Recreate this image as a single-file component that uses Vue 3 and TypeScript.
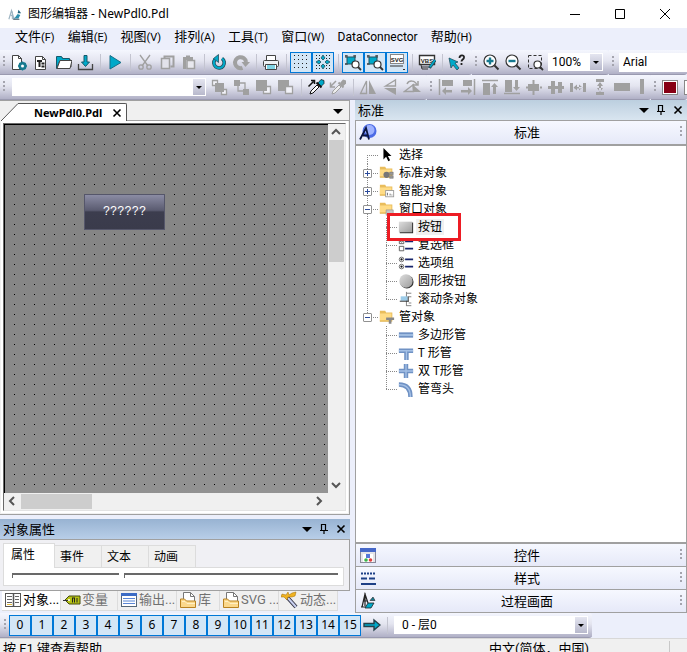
<script setup lang="ts">
import { ref } from 'vue'

interface Tool {
  icon?: string
  label?: string
  sep?: boolean
  on?: boolean
}
interface TreeNode {
  label: string
  icon: string
  depth: number
  toggle?: string
  last?: boolean
  selected?: boolean
}

const teal = '#00a9c9'
const dark = '#25404a'
const grey = '#a0a0a0'

const dots = (xs: number[], ys: number[]) =>
  ys.map((y) => xs.map((x) => `<rect x="${x}" y="${y}" width="1" height="1" fill="#222"/>`).join('')).join('')

const folder =
  '<path d="M1 2h6l1 2h7v10H1z" fill="#e9bd5c"/><path d="M1 5h13v8.500H1z" fill="#ffdc86"/><path d="M1 13.500h13" stroke="#d9a93f"/>'
const magnifier = (x: number, y: number, r: number) =>
  `<circle cx="${x}" cy="${y}" r="${r}" fill="#fff" stroke="#333" stroke-width="1.200"/><path d="M${x + r - 1} ${y + r - 1}l3 3" stroke="#333" stroke-width="1.800"/>`

const icons: Record<string, string> = {
  logo: '<path d="M1 14l3-10 3 10M3 9l4 3M5 5v9" fill="none" stroke="#9db4c2" stroke-width="1.300"/><path d="M8 12l3-4 3 1-2 4H6z" fill="#2b8fae"/><path d="M12 3l3 4h-4z" fill="#24647e"/><path d="M6 14h7" stroke="#20394a"/>',
  fresh: '<path d="M2.500 2.500h6l3 3v11h-9z" fill="#fff" stroke="#444"/><path d="M8.500 2.500v3h3" fill="none" stroke="#444"/><circle cx="12.500" cy="13" r="3" fill="#fff" stroke="#16798f" stroke-width="2.200"/><path d="M12.500 8.500v9M8 13h9M9.500 10l6 6M15.500 10l-6 6" stroke="#16798f" stroke-width="1.400"/><circle cx="12.500" cy="13" r="1.500" fill="#fff"/>',
  text: '<path d="M3.500 3.500h7l3 3v10h-10z" fill="#fff" stroke="#444"/><path d="M10.500 3.500v3h3" fill="none" stroke="#444"/><path d="M5 8h5M7.500 8v6M9.500 10.500h3M9.500 13.500h3" fill="none" stroke="#222" stroke-width="2"/>',
  open: `<path d="M3 13V5h6l2 2h6v7z" fill="#fff" stroke="#444"/><path d="M2.500 15.500V3.500h5l1 2h7v2h-9.500z" fill="${teal}" stroke="#16596b"/><path d="M6 7.500h12l-2 8H3z" fill="#fff" stroke="#444"/>`,
  save: `<path d="M2.500 11v5.500h14V11" fill="none" stroke="#444" stroke-width="1.300"/><path d="M8 2.500h3V9h2.500l-4 4.500L5.500 9H8z" fill="${teal}" stroke="#16596b"/>`,
  play: `<path d="M4 2.500l11 7L4 16z" fill="${teal}" stroke="#176f88"/>`,
  cut: `<g fill="none" stroke="${grey}" stroke-width="1.300"><path d="M4 2l8 11M14 2L6 13"/><circle cx="5" cy="14" r="2.200"/><circle cx="13" cy="14" r="2.200"/></g>`,
  copy: `<path d="M6.500 5V3.500h9v10h-3" fill="none" stroke="${grey}" stroke-width="2"/><path d="M3.500 5.500h8v10h-8z" fill="#e2e2ea" stroke="${grey}" stroke-width="1.500"/>`,
  paste: `<path d="M3 4h10v3H6v9H3z" fill="${grey}"/><path d="M6 2.500h4v2H6z" fill="${grey}"/><path d="M7 7.500h7.500v8H7z" fill="#e8e8ee" stroke="${grey}" stroke-width="1.500"/>`,
  undo: `<path d="M5 6.500A5.200 5.200 0 1 0 12 5.500" fill="none" stroke="#24515e" stroke-width="3.600"/><path d="M5 6.500A5.200 5.200 0 1 0 12 5.500" fill="none" stroke="${teal}" stroke-width="2"/><path d="M8.500 1.500v8l-5-4z" fill="${teal}" stroke="#24515e" stroke-width=".8"/>`,
  redo: `<path d="M10.500 14.800A5.500 5.500 0 1 1 14 9" fill="none" stroke="${grey}" stroke-width="4"/><path d="M9.500 9h8.500l-4.500 5z" fill="${grey}"/>`,
  print: `<path d="M4.500 7V2.500h9V7" fill="#fff" stroke="#444"/><rect x="1.500" y="7.500" width="15" height="6" rx="1" fill="#eef1f4" stroke="#444"/><path d="M3.500 11.500h11v5h-11z" fill="#fff" stroke="#444"/><path d="M5 13h8M5 15h8" stroke="${teal}"/>`,
  grid: dots([2, 6, 10, 14], [2, 6, 10, 14]),
  snap: `${dots([2, 5, 12, 15], [2, 5, 12, 15])}<path d="M9 2l2 3-2 2-2-2zM9 11l2 2-2 3-2-3zM2 9l3-2 2 2-2 2zM11 9l2-2 3 2-3 2z" fill="${teal}" stroke="#24515e" stroke-width=".8"/>`,
  zoomAll: `<path d="M1 3h3M9 3h3M2 2v3M11 2v3M2 10v2M1 11h3" stroke="#333"/><path d="M3 4h8v7H3z" fill="${teal}" stroke="#24515e"/>${magnifier(11.5, 11.5, 3.5)}`,
  svg: '<rect x="2.500" y="1.500" width="13" height="9" fill="#fff" stroke="#888"/><text x="9" y="8.500" text-anchor="middle" font-family="Liberation Sans" font-size="6" font-weight="bold" fill="#222">SVG</text><path d="M2 13h13M15 16.500h2" stroke="#333"/>',
  vbs: '<path d="M1.500 2.500h15v9h-15z" fill="#fff" stroke="#333" stroke-width="1.400"/><path d="M3 12l1 4h6M3 14h9" fill="none" stroke="#333"/><text x="9" y="9.500" text-anchor="middle" font-family="Liberation Sans" font-size="6" font-weight="bold" fill="#222">VBS</text><path d="M17 7l-5.500 8" stroke="#24515e" stroke-width="3"/><path d="M17 7l-5 7" stroke="#00a9c9" stroke-width="1.500"/>',
  help: `<path d="M1 5l9 4-3 1 4 5-2 2-4-5-2 3z" fill="${teal}" stroke="#24515e" stroke-width=".8"/><path d="M11.500 5c0-3.500 5-3.500 4.500-.5 0 2-2.500 2-2.500 4M13.500 10v2" fill="none" stroke="#222" stroke-width="1.800"/>`,
  zoomIn: '<circle cx="8" cy="8" r="6" fill="#fff" stroke="#333" stroke-width="1.200"/><path d="M12.500 12.500l4 4" stroke="#333" stroke-width="2"/><path d="M8 4.500v7M4.500 8h7" stroke="#16798f" stroke-width="2.400"/>',
  zoomOut: '<circle cx="8" cy="8" r="6" fill="#fff" stroke="#333" stroke-width="1.200"/><path d="M12.500 12.500l4 4" stroke="#333" stroke-width="2"/><path d="M4.500 8h7" stroke="#16798f" stroke-width="2.400"/>',
  zoomArea: `<path d="M2.500 2.500h13v13h-13z" fill="none" stroke="#333" stroke-dasharray="3 2"/>${magnifier(11.5, 11.5, 3.5)}`,
  front: `<path d="M1.500 2.500h5v5h-5zM10.500 11.500h5v5h-5z" fill="#f2f2f8" stroke="${grey}" stroke-width="1.300"/><path d="M4 5h9v9H4z" fill="${grey}"/>`,
  back: `<path d="M7 5h5v7M5 8v5h5" fill="none" stroke="${grey}" stroke-width="1.300"/><path d="M1 2h6v6H1zM10 11h6v6h-6z" fill="${grey}"/>`,
  forward: `<path d="M8.500 8.500h7v7h-7z" fill="#f2f2f8" stroke="${grey}" stroke-width="1.300"/><path d="M1 2h11v11H1z" fill="${grey}"/>`,
  backward: `<path d="M1 2h11v11H1z" fill="${grey}"/><path d="M8.500 8.500h7v7h-7z" fill="#f2f2f8" stroke="${grey}" stroke-width="1.300"/>`,
  pick: `<path d="M1.500 8.500l5-5M4 2.500h3.500V6" fill="none" stroke="#111" stroke-width="1.500"/><path d="M3 16l1-3 6-6 2 2-6 6z" fill="#fff" stroke="#111"/><path d="M11 5l3-3.500 3 1v3l-3 3z" fill="${teal}" stroke="#111" stroke-width=".7"/><path d="M9.500 4.500l5 5" stroke="#111" stroke-width="2"/>`,
  drop: `<path d="M7 3L2 8M1.500 4.500V9H6" fill="none" stroke="${grey}" stroke-width="1.500"/><path d="M3 16l1-3 6-6 2 2-6 6z" fill="#eee" stroke="${grey}"/><path d="M11 5l3-3.500 3 1v3l-3 3z" fill="${grey}"/><path d="M9.500 4.500l5 5" stroke="${grey}" stroke-width="2"/>`,
  flipH: `<path d="M7.500 3v12.500H1.500z" fill="none" stroke="${grey}" stroke-width="1.300"/><path d="M10 2v14h7z" fill="${grey}"/>`,
  flipV: `<path d="M14.500 2v6H4.500z" fill="none" stroke="${grey}" stroke-width="1.300"/><path d="M15 10v7L3 10z" fill="${grey}"/>`,
  rotate: `<path d="M1.500 13.500h9v-7z" fill="none" stroke="${grey}" stroke-width="1.300"/><path d="M10 14h8L9 6z" fill="${grey}"/><path d="M4 6c2-4 8-4 10 1M15 3v4h-4" fill="none" stroke="${grey}" stroke-width="1.500"/>`,
  alignL: `<path d="M2.500 1v16" stroke="${grey}" stroke-width="1.500"/><path d="M5 2h11v6H5zM5 13l4-4v3h6v2.500H9V17z" fill="${grey}"/>`,
  alignR: `<path d="M15.500 1v16" stroke="${grey}" stroke-width="1.500"/><path d="M4 2h9v6H4zM13 13L9 9v3H2v2.500h7V17z" fill="${grey}"/>`,
  alignT: `<path d="M1 2.500h16" stroke="${grey}" stroke-width="1.500"/><path d="M2 5h7v12H2zM12 16V9h-2l3.500-4L17 9h-2v7z" fill="${grey}"/>`,
  alignB: `<path d="M1 15.500h16" stroke="${grey}" stroke-width="1.500"/><path d="M2 2h7v12H2zM12 2v7h-2l3.500 4L17 9h-2V2z" fill="${grey}"/>`,
  centerH: `<path d="M3 6h11v7H3zM7.500 2h2v4h-2zM7.500 13h2v4h-2zM1 8.500h3v2H1zM15 8.500h2v2h-2z" fill="${grey}"/>`,
  centerV: `<path d="M4 3h4v13H4zM11 4h4v11h-4zM1 8h16v3H1z" fill="${grey}"/>`,
  spaceH: `<path d="M1 5h3v9H1zM14 5h3v9h-3zM5 9h8v1.500H5zM8 6.500v6L4.500 9.500zM10 6.500v6l3.500-3z" fill="${grey}"/>`,
  spaceV: `<path d="M5 1h8v3H5zM5 14h8v3H5zM8 5h2v8H8zM9 4l3 4H6zM9 14l3-4H6z" fill="${grey}"/>`,
  sameW: `<path d="M1 5h16v8H1z" fill="${grey}"/>`,
  sameH: `<path d="M7 1h4v15H7z" fill="${grey}"/>`,
  color: '<rect x="1.500" y="2.500" width="15" height="14" fill="#fff" stroke="#888"/><rect x="3" y="4" width="12" height="11" fill="#870014"/>',
  outline: '<rect x="1.500" y="2.500" width="15" height="14" fill="#fff" stroke="#888"/>',
  arrow: `<path d="M1 7.500h10V4l6 5-6 5v-3.500H1z" fill="${teal}" stroke="${dark}" stroke-width="1.400"/>`,
  caret: '<path d="M4 7h10l-5 5z" fill="#000"/>',
  pin: '<path d="M6.500 4.500h4v6h-4zM5 10.500h8M9 11v3M10.500 5v5" fill="none" stroke="#000" stroke-width="1.200"/>',
  close: '<path d="M5.500 5.500l7 7M12.500 5.500l-7 7" stroke="#000" stroke-width="1.600"/>',
  cursor: '<path d="M5 1v13l3-3 2.500 5 2-1-2.500-5h4z" fill="#000"/>',
  standard: `${folder}<circle cx="8.500" cy="11" r="3.500" fill="#777"/><path d="M12 8h4v3h-4zM12 12h4v3h-4z" fill="#999" stroke="#666" stroke-width=".5"/>`,
  smart: `${folder}<rect x="7.500" y="8.500" width="9" height="7" fill="#fff" stroke="#999"/><path d="M9.500 14v-3M12.500 14v-2M14.500 14v-1" stroke="#666"/>`,
  windowObj: `${folder}<path d="M8 10h8v6H8z" fill="#c6c6c6" stroke="#888" stroke-width=".6"/>`,
  pipeObj: `${folder}<path d="M8 9.500h9v3h-3v4h-3v-4H8z" fill="#888"/>`,
  button: '<rect x="2" y="4" width="15" height="12" fill="#222"/><rect x="1" y="3" width="15" height="12" fill="url(#btnShade)"/>',
  check: '<path d="M1.500 2.500h5v5h-5zM1.500 10.500h5v5h-5z" fill="#fff" stroke="#555"/><path d="M2 4l2 2 3-4" fill="none" stroke="#333"/><path d="M8 5h9M8 13h9" stroke="#17246b" stroke-width="2"/>',
  radio: '<circle cx="4" cy="5" r="2.600" fill="#fff" stroke="#666"/><circle cx="4" cy="13" r="2.600" fill="#fff" stroke="#666"/><circle cx="4" cy="5" r="1.300" fill="#111"/><circle cx="4" cy="13" r="1.300" fill="#111"/><path d="M8 5h9M8 13h9" stroke="#17246b" stroke-width="2"/>',
  round: '<circle cx="10" cy="10" r="7.500" fill="#333"/><circle cx="9" cy="9" r="7.500" fill="url(#btnShade)"/>',
  slider: '<path d="M9.500 1v16M10 2.500h5M10 16.500h5M12 6.500h3M12 13.500h3" stroke="#777"/><path d="M3 6h8v5H3z" fill="#9ccbe8"/><path d="M2 11.500h10M11.500 6v6" stroke="#222"/>',
  pipe: '<path d="M1 6h16v6H1z" fill="#7092c4"/><path d="M1 9h16" stroke="#a5c1e6" stroke-width="2"/>',
  tee: '<path d="M1 4h16v5h-5v8H7V9H1z" fill="#7092c4"/><path d="M1 6.500h16M9.500 7v10" stroke="#a5c1e6" stroke-width="1.500"/>',
  cross: '<path d="M6.500 1h5v5.500H17v5h-5.500V17h-5v-5.500H1v-5h5.500z" fill="#7092c4"/><path d="M1 9h16M9 1v16" stroke="#a5c1e6" stroke-width="1.500"/>',
  bend: '<path d="M1 4c9 0 13 5 13 14" fill="none" stroke="#7092c4" stroke-width="5"/><path d="M1 4c9 0 13 5 13 14" fill="none" stroke="#a5c1e6" stroke-width="1.500"/>',
  palette: '<circle cx="10.500" cy="8" r="7" fill="#4c6be6"/><circle cx="10.500" cy="7" r="5" fill="#9fb3ff"/><path d="M1 16.500L7 5l3 11.500M4 12.500h5" fill="none" stroke="#0b1540" stroke-width="1.800"/>',
  controls: '<rect x="1.500" y="2.500" width="15" height="14" fill="#e4e4e8" stroke="#889"/><path d="M1 2h16v4H1z" fill="#4668c8"/><path d="M4 8h10v8H4z" fill="#fff"/><path d="M7 8h4v4H7z" fill="#5577d8"/><circle cx="7" cy="14" r="1.800" fill="#3ab54a"/><circle cx="11.500" cy="14" r="1.800" fill="#e04040"/>',
  styles: '<path d="M2 4.500h15" stroke="#1d3f86" stroke-width="2" stroke-dasharray="2 1"/><path d="M2 9.500h15" stroke="#1d3f86" stroke-width="2" stroke-dasharray="6 2"/><path d="M2 15h15" stroke="#1d3f86" stroke-width="2"/>',
  process: `<path d="M3 15L6 2l3 9M4 9h4M6 1v13M2 15h5" fill="none" stroke="#222" stroke-width="1.200"/><path d="M6 16l3-5h6l-3 5z" fill="${teal}" stroke="#222" stroke-width=".8"/><path d="M11 8.500l3-3.500 2 3.500z" fill="#16798f" stroke="#222" stroke-width=".6"/>`,
  props: '<rect x="1.500" y="2.500" width="15" height="13" fill="#fff" stroke="#555"/><path d="M9.500 2v14" stroke="#555" stroke-width="1.500"/><path d="M3 5.500h5M3 8.500h5M3 11.500h5M11 5.500h4M11 8.500h4M11 11.500h4" stroke="#666"/><path d="M3 13.500h5" stroke="#e0b83e"/>',
  tag: '<path d="M2 9l4-4h11v8H6z" fill="#b5c215" stroke="#454a0c"/><circle cx="6" cy="9" r="1" fill="#fff"/><path d="M9.500 7v4.500M11.500 7v4.500M14 7v4.500M9 7h3" fill="none" stroke="#222"/><path d="M0 9.500h5" stroke="#333"/>',
  output: '<rect x="1.500" y="2.500" width="15" height="13" fill="#fff" stroke="#567"/><path d="M1 2h16v3H1z" fill="#3c6cc5"/><path d="M3 7.500h12M3 10h12M3 12.500h12" stroke="#5b87d6" stroke-width="1.200"/>',
  library: '<path d="M4.500 1.500h7l4 4v9h-11z" fill="#fff" stroke="#777"/><path d="M11.500 1.500v4h4" fill="none" stroke="#777"/><path d="M1.500 8h4l2 2h9v6.500h-15z" fill="#fbd88b" stroke="#b98220"/><path d="M3 10.500h3l2 2h8" fill="none" stroke="#fff0c4"/>',
  wand: '<path d="M6 6l9 10" stroke="#334" stroke-width="4"/><path d="M7 7l8 9" stroke="#c8d0f0" stroke-width="2"/><path d="M1 3l4 1 2-3 1 3 3-2 4-1-1 4-3 1-4 0-1 3-3-3-3 0z" fill="#f0b323" stroke="#a06c00" stroke-width=".5"/>',
}

const menus: [string, string][] = [
  ['文件', '(F)'], ['编辑', '(E)'], ['视图', '(V)'], ['排列', '(A)'],
  ['工具', '(T)'], ['窗口', '(W)'], ['DataConnector', ''], ['帮助', '(H)'],
]
const t = (icon: string, label: string, extra: Partial<Tool> = {}): Tool => ({ icon, label, ...extra })
const sep: Tool = { sep: true }

const fileTools: Tool[] = [
  t('fresh', '新建'), t('text', '新建文本'), t('open', '打开'), t('save', '保存'), sep,
  t('play', '运行'), sep,
  t('cut', '剪切'), t('copy', '复制'), t('paste', '粘贴'), sep,
  t('undo', '撤消'), t('redo', '重做'), sep,
  t('print', '打印'), sep,
  t('grid', '网格', { on: true }), t('snap', '捕捉', { on: true }), sep,
  t('zoomAll', '缩放 1', { on: true }), t('zoomAll', '缩放 2', { on: true }), t('svg', 'SVG', { on: true }), sep,
  t('vbs', 'VBS'), sep, t('help', '帮助'),
]
const zoomTools = [t('zoomIn', '放大'), t('zoomOut', '缩小'), t('zoomArea', '区域缩放')]
const orderTools: Tool[] = [
  t('front', '置前'), t('back', '置后'), t('forward', '前移'), t('backward', '后移'), sep,
  t('pick', '拾取属性'), t('drop', '应用属性'), sep,
  t('flipH', '水平翻转'), t('flipV', '垂直翻转'), t('rotate', '旋转'),
]
const alignTools = [
  t('alignL', '左对齐'), t('alignR', '右对齐'), t('alignT', '顶对齐'), t('alignB', '底对齐'), t('centerH', '水平居中'),
  t('centerV', '垂直居中'), t('spaceH', '水平间距'), t('spaceV', '垂直间距'), t('sameW', '同宽'), t('sameH', '同高'),
]
const colorTools = [t('color', '颜色'), t('outline', '边框颜色')]

const tree: TreeNode[] = [
  { label: '选择', icon: 'cursor', depth: 0 },
  { label: '标准对象', icon: 'standard', depth: 0, toggle: '+' },
  { label: '智能对象', icon: 'smart', depth: 0, toggle: '+' },
  { label: '窗口对象', icon: 'windowObj', depth: 0, toggle: '-' },
  { label: '按钮', icon: 'button', depth: 1, selected: true },
  { label: '复选框', icon: 'check', depth: 1 },
  { label: '选项组', icon: 'radio', depth: 1 },
  { label: '圆形按钮', icon: 'round', depth: 1 },
  { label: '滚动条对象', icon: 'slider', depth: 1, last: true },
  { label: '管对象', icon: 'pipeObj', depth: 0, toggle: '-', last: true },
  { label: '多边形管', icon: 'pipe', depth: 1 },
  { label: 'T 形管', icon: 'tee', depth: 1 },
  { label: '双 T形管', icon: 'cross', depth: 1 },
  { label: '管弯头', icon: 'bend', depth: 1, last: true },
]
const lastRoot = tree.findIndex((n) => n.depth === 0 && n.last)

const sections = [
  { label: '控件', icon: 'controls' },
  { label: '样式', icon: 'styles' },
  { label: '过程画面', icon: 'process' },
]
const propTabs = ['属性', '事件', '文本', '动画']
const dockTabs = [
  { label: '对象...', icon: 'props' },
  { label: '变量', icon: 'tag' },
  { label: '输出...', icon: 'output' },
  { label: '库', icon: 'library' },
  { label: 'SVG ...', icon: 'library' },
  { label: '动态...', icon: 'wand' },
]
const propTab = ref(0)
const dockTab = ref(0)
</script>

<template>
  <div class="app">
    <svg class="defs" width="0" height="0" aria-hidden="true">
      <linearGradient id="btnShade" x1="0" y1="0" x2="1" y2="1">
        <stop offset="0" stop-color="#dedede" />
        <stop offset="1" stop-color="#9c9c9c" />
      </linearGradient>
    </svg>

    <header class="titlebar">
      <svg class="icon logo" viewBox="0 0 16 16" v-html="icons.logo" />
      <span class="caption">图形编辑器 - NewPdl0.Pdl</span>
      <div class="winbtns">
        <button aria-label="最小化"><svg viewBox="0 0 12 12"><path d="M1 6.500h10" /></svg></button>
        <button aria-label="最大化"><svg viewBox="0 0 12 12"><path d="M1.500 1.500h9v9h-9z" /></svg></button>
        <button aria-label="关闭"><svg viewBox="0 0 12 12"><path d="M1 1l10 10M11 1L1 11" /></svg></button>
      </div>
    </header>

    <nav class="menubar">
      <a v-for="m in menus" :key="m[0]" href="#" :class="{ plain: !m[1] }">{{ m[0] }}<small v-if="m[1]">{{ m[1] }}</small></a>
    </nav>

    <div class="toolrow">
      <div class="band">
        <i class="grip" />
        <template v-for="(b, i) in fileTools" :key="i">
          <i v-if="b.sep" class="sep" />
          <button v-else class="tool" :class="{ on: b.on }" :aria-label="b.label">
            <svg class="icon" viewBox="0 0 18 18" v-html="icons[b.icon!]" />
          </button>
        </template>
      </div>
      <div class="band zooming">
        <i class="grip" />
        <button v-for="b in zoomTools" :key="b.label" class="tool" :aria-label="b.label">
          <svg class="icon" viewBox="0 0 18 18" v-html="icons[b.icon!]" />
        </button>
        <label class="combo zoom"><select aria-label="缩放比例"><option>100%</option></select><i class="drop" /></label>
      </div>
      <div class="band fill">
        <i class="grip" />
        <label class="combo font"><select aria-label="字体"><option>Arial</option></select></label>
      </div>
    </div>

    <div class="toolrow">
      <div class="band">
        <i class="grip" />
        <label class="combo object"><select aria-label="对象"><option></option></select><i class="drop" /></label>
        <template v-for="(b, i) in orderTools" :key="i">
          <i v-if="b.sep" class="sep" />
          <button v-else class="tool" :aria-label="b.label">
            <svg class="icon" viewBox="0 0 18 18" v-html="icons[b.icon!]" />
          </button>
        </template>
      </div>
      <div class="band align">
        <i class="grip" />
        <button v-for="b in alignTools" :key="b.label" class="tool" :aria-label="b.label">
          <svg class="icon" viewBox="0 0 18 18" v-html="icons[b.icon!]" />
        </button>
      </div>
      <div class="band fill">
        <i class="grip" />
        <button v-for="b in colorTools" :key="b.label" class="tool" :aria-label="b.label">
          <svg class="icon" viewBox="0 0 18 18" v-html="icons[b.icon!]" />
        </button>
      </div>
    </div>

    <main class="workspace">
      <div class="left">
        <section class="document">
          <div class="doctabs">
            <svg class="slant" viewBox="0 0 20 20" preserveAspectRatio="none">
              <path d="M0 20L18 2h2v18z" fill="#fff" /><path d="M1 20L18 2.500h2" fill="none" stroke="#555" />
            </svg>
            <div class="doctab">
              <span>NewPdl0.Pdl</span>
              <button aria-label="关闭"><svg class="icon" viewBox="0 0 18 18" v-html="icons.close" /></button>
            </div>
            <div class="tabrest">
              <button aria-label="文档列表"><svg class="icon" viewBox="0 0 18 18" v-html="icons.caret" /></button>
            </div>
          </div>
          <div class="view">
            <div class="canvas">
              <svg class="dots" aria-hidden="true">
                <pattern id="dotGrid" width="10" height="10" patternUnits="userSpaceOnUse">
                  <rect x="9" y="9" width="1" height="1" />
                </pattern>
                <rect width="100%" height="100%" fill="url(#dotGrid)" />
              </svg>
              <button class="canvas-button">??????</button>
            </div>
            <div class="vscroll">
              <svg viewBox="0 0 16 16"><path d="M4 10l4-4 4 4" /></svg>
              <i class="thumb" />
              <svg viewBox="0 0 16 16"><path d="M4 6l4 4 4-4" /></svg>
            </div>
            <div class="hscroll">
              <svg viewBox="0 0 16 16"><path d="M10 4L6 8l4 4" /></svg>
              <i class="thumb" />
              <svg viewBox="0 0 16 16"><path d="M6 4l4 4-4 4" /></svg>
            </div>
          </div>
        </section>

        <section class="props">
          <div class="panel-title active">
            <span>对象属性</span>
            <button v-for="k in ['caret', 'pin', 'close']" :key="k" :aria-label="k">
              <svg class="icon" viewBox="0 0 18 18" v-html="icons[k]" />
            </button>
          </div>
          <div class="props-body">
            <div class="proptabs">
              <button v-for="(p, i) in propTabs" :key="p" :class="{ current: propTab === i }" @click="propTab = i">{{ p }}</button>
            </div>
            <div class="wells"><i class="well tree-well" /><i class="well" /></div>
          </div>
        </section>

        <div class="docktabs">
          <button v-for="(d, i) in dockTabs" :key="d.label" :class="{ current: dockTab === i }" @click="dockTab = i">
            <svg class="icon" viewBox="0 0 18 18" v-html="icons[d.icon]" />{{ d.label }}
          </button>
        </div>
      </div>

      <aside class="right">
        <div class="panel-title">
          <span>标准</span>
          <button v-for="k in ['caret', 'pin', 'close']" :key="k" :aria-label="k">
            <svg class="icon" viewBox="0 0 18 18" v-html="icons[k]" />
          </button>
        </div>
        <div class="stack">
          <button class="section head">
            <svg class="icon" viewBox="0 0 18 18" v-html="icons.palette" /><span>标准</span><i class="grip" />
          </button>
          <ul class="tree">
            <li v-for="(n, i) in tree" :key="n.label" :class="{ selected: n.selected }">
              <i class="rail" :class="{ first: i === 0, half: i === lastRoot, none: i > lastRoot, branch: n.depth === 0 }">
                <b v-if="n.toggle" :class="{ plus: n.toggle === '+' }" />
              </i>
              <i v-if="n.depth" class="rail branch child" :class="{ half: n.last }" />
              <svg class="icon" viewBox="0 0 18 18" v-html="icons[n.icon]" />
              <span>{{ n.label }}</span>
              <i v-if="n.selected" class="marker" />
            </li>
          </ul>
          <button v-for="s in sections" :key="s.label" class="section">
            <svg class="icon" viewBox="0 0 18 18" v-html="icons[s.icon]" /><span>{{ s.label }}</span><i class="grip" />
          </button>
        </div>
      </aside>
    </main>

    <div class="toolrow layers">
      <div class="band">
        <i class="grip" />
        <button v-for="n in 16" :key="n" class="tool on">{{ n - 1 }}</button>
        <button class="tool" aria-label="转到层"><svg class="icon" viewBox="0 0 18 18" v-html="icons.arrow" /></button>
        <i class="sep" />
        <label class="combo layer"><select aria-label="层"><option>0 - 层0</option></select><i class="drop" /></label>
      </div>
    </div>

    <footer class="status">
      <span class="hint">按 F1 键查看帮助</span>
      <span class="lang">中文(简体，中国)</span>
    </footer>
  </div>
</template>

<style>
body {
  margin: 0;
  overflow: hidden;
}
</style>

<style scoped>
.app {
  display: flex;
  flex-direction: column;
  height: 100vh;
  overflow: hidden;
  background: #eceffb;
  color: #000;
  font: 12px/16px "Noto Sans", "Noto Sans CJK SC", sans-serif;
  white-space: nowrap;
}
.app * {
  box-sizing: border-box;
}
.defs {
  position: absolute;
}
button {
  display: flex;
  align-items: center;
  justify-content: center;
  flex: none;
  margin: 0;
  padding: 0;
  border: 0;
  background: none;
  color: inherit;
  font: inherit;
}
.icon {
  display: block;
  flex: none;
  width: 18px;
  height: 18px;
}

/* title and menu */
.titlebar {
  display: flex;
  align-items: center;
  flex: none;
  height: 28px;
  padding-left: 8px;
  background: #fff;
}
.logo {
  width: 14px;
  height: 16px;
}
.caption {
  flex: 1;
  padding-left: 6px;
}
.winbtns {
  display: flex;
}
.winbtns button {
  width: 45px;
  height: 26px;
}
.winbtns svg {
  width: 12px;
  height: 12px;
  fill: none;
  stroke: #000;
}
.menubar {
  display: flex;
  align-items: center;
  flex: none;
  gap: 13px;
  height: 22px;
  padding: 0 0 4px 15px;
}
.menubar a {
  color: #000;
  font-size: 13px;
  text-decoration: none;
}
.menubar a.plain {
  font-family: Roboto, sans-serif;
  font-size: 12px;
}
.menubar small {
  font-family: Roboto, sans-serif;
  font-size: 11px;
}

/* tool bars */
.toolrow {
  display: flex;
  flex: none;
  height: 25px;
  overflow: hidden;
}
.band {
  display: flex;
  align-items: center;
  flex: none;
  height: 25px;
  padding-right: 4px;
  border-bottom: 1px solid #9a9ab0;
  border-radius: 0 3px 3px 0;
  background: linear-gradient(#f4f6fe, #e4e5f0 45%, #b0b0c6);
}
.band.zooming {
  padding-right: 6px;
}
.band.fill {
  flex: 1;
  min-width: 0;
  padding-right: 0;
  overflow: hidden;
}
.grip {
  flex: none;
  width: 8px;
  height: 14px;
  background: repeating-linear-gradient(#a4a4ae 0 2px, transparent 2px 4px) 3px 1px / 2px 12px no-repeat;
}
.sep {
  flex: none;
  width: 8px;
  height: 17px;
  background: linear-gradient(#c3c4d0, #c3c4d0) 4px 0 / 1px 100% no-repeat;
}
.tool {
  width: 22px;
  height: 21px;
}
.tool.on {
  border: 1px solid #0078d7;
  background: #d3e6f6;
}
.align {
  padding: 0;
}
.align .tool:last-child {
  width: 18px;
}
.combo {
  display: flex;
  position: relative;
  flex: none;
  height: 18px;
  background: #fff;
  font-family: Roboto, "Noto Sans CJK SC", sans-serif;
}
.combo select {
  flex: 1;
  min-width: 0;
  padding: 0 4px;
  border: 0;
  background: transparent;
  color: #000;
  font: inherit;
  appearance: none;
}
.drop {
  width: 12px;
  margin: 1px;
  background: linear-gradient(#e4e5f0, #b8b9cc);
  pointer-events: none;
}
.drop::after {
  content: "";
  display: block;
  margin: 7px 3px 0;
  border: 3px solid transparent;
  border-top-color: #000;
  border-bottom: 0;
}
.zoom {
  width: 55px;
  margin-left: 2px;
}
.font {
  flex: 1;
  height: 19px;
  margin-left: 2px;
}
.object {
  width: 194px;
  margin: 0 3px 0 4px;
}
.layer {
  width: 194px;
  margin-left: 3px;
}
.layer select {
  padding-left: 8px;
}

/* work area */
.workspace {
  display: flex;
  flex: 1;
  gap: 5px;
  min-height: 0;
}
.left {
  display: flex;
  flex-direction: column;
  flex: 350 1 0;
  min-width: 0;
}
.document {
  display: flex;
  flex-direction: column;
  flex: 1;
  min-height: 0;
  border: solid #a0a0a0;
  border-width: 1px 1px 1px 0;
  background: #f0f0f0;
}
.doctabs {
  display: flex;
  flex: none;
  height: 20px;
}
.slant {
  flex: none;
  width: 20px;
  height: 20px;
}
.doctab {
  display: flex;
  align-items: center;
  justify-content: space-between;
  width: 107px;
  height: 18px;
  margin-top: 2px;
  padding-left: 14px;
  border: solid #555;
  border-width: 1px 1px 0 0;
  border-radius: 0 2px 0 0;
  background: #fff;
  font-size: 11px;
  font-weight: bold;
}
.tabrest {
  display: flex;
  align-items: center;
  justify-content: flex-end;
  flex: 1;
  padding-right: 2px;
  border-bottom: 1px solid #a0a0a0;
}
.view {
  display: grid;
  grid-template: minmax(0, 1fr) 17px / minmax(0, 1fr) 17px;
  flex: 1;
  min-height: 0;
  margin: 2px 3px 3px 3px;
  border: 1px solid #696969;
  border-right-color: #e3e3e3;
  border-bottom-color: #e3e3e3;
  outline: 2px solid #fff;
}
.canvas {
  position: relative;
  overflow: hidden;
  border: solid #000;
  border-width: 1px 0 0 1px;
  background: linear-gradient(160deg, #7f7f7f, #949494);
}
.dots {
  display: block;
  width: 100%;
  height: 100%;
}
.canvas-button {
  position: absolute;
  top: 69px;
  left: 79px;
  width: 81px;
  height: 36px;
  border: 1px solid #55566a;
  background: linear-gradient(#8b8ca4, #5a5b70 45%, #3c3d4e 50%, #3a3b4b);
  color: #fff;
  font-family: "Liberation Mono", monospace;
}
.vscroll,
.hscroll {
  display: flex;
}
.vscroll {
  flex-direction: column;
  justify-content: space-between;
}
.vscroll svg,
.hscroll svg {
  flex: none;
  width: 16px;
  height: 16px;
  fill: none;
  stroke: #555;
  stroke-width: 2px;
}
.thumb {
  background: #cdcdcd;
}
.vscroll .thumb {
  width: 15px;
  height: 33%;
  margin: 0 1px auto;
}
.hscroll .thumb {
  width: 22%;
  margin: 1px auto 1px 1px;
}
.hscroll svg:last-child {
  margin-right: 1px;
}

/* docked panels */
.panel-title {
  display: flex;
  align-items: center;
  flex: none;
  height: 20px;
  padding: 0 1px 1px 3px;
  background: linear-gradient(#bccfdf, #d9e5f0);
  font-size: 13px;
}
.panel-title.active {
  background: linear-gradient(#98b3d2, #b8cee8);
}
.panel-title span {
  flex: 1;
}
.panel-title button {
  width: 17px;
}
.props {
  flex: none;
  padding-top: 4px;
}
.props-body {
  height: 52px;
  padding: 3px 5px 3px 3px;
  border: solid #a0a0a0;
  border-width: 1px 1px 1px 0;
  background: #f0f0f4;
}
.proptabs {
  display: flex;
  align-items: flex-end;
  height: 25px;
}
.proptabs button {
  width: 47px;
  height: 23px;
  padding-right: 12px;
  border: 1px solid #dcdcdc;
  border-left: 0;
  background: #f0f0f0;
}
.proptabs button.current {
  position: relative;
  z-index: 1;
  width: 52px;
  height: 25px;
  padding-bottom: 3px;
  border-left: 1px solid #dcdcdc;
  border-bottom: 0;
  background: #fff;
}
.wells {
  display: flex;
  gap: 5px;
  height: 19px;
  margin-top: -1px;
  padding: 5px 5px 0 8px;
  border: 1px solid #dcdcdc;
  background: #fff;
}
.well {
  flex: 2;
  height: 5px;
  border: solid #696969;
  border-width: 2px 0 0 1px;
}
.tree-well {
  flex: 1;
}
.docktabs {
  display: grid;
  grid-template-columns: 59px 57px 59px 43px 59px 59px;
  flex: none;
  height: 22px;
  padding-left: 2px;
}
.docktabs button {
  justify-content: flex-start;
  gap: 1px;
  height: 20px;
  padding: 0 0 1px 2px;
  overflow: hidden;
  border: solid #dcdcdc;
  border-width: 0 1px 1px 0;
  background: #f0f0f0;
  color: #707070;
  font-family: Roboto, "Noto Sans CJK SC", sans-serif;
  font-size: 13px;
}
.docktabs button.current {
  background: #fff;
  color: #000;
}
.right {
  display: flex;
  flex-direction: column;
  flex: 332 1 0;
  min-width: 0;
}
.stack {
  display: flex;
  flex-direction: column;
  flex: 1;
  min-height: 0;
  border: solid #a0a0a0;
  border-width: 1px 1px 0;
}
.section {
  width: 100%;
  height: 23px;
  padding: 0 1px 0 3px;
  border-bottom: 1px solid #a0a0a0;
  background: linear-gradient(#f6f8ff, #e6e9f8);
  font-size: 13px;
}
.section.head {
  height: 25px;
  padding-bottom: 2px;
  border-bottom-width: 2px;
}
.section span {
  flex: 1;
  text-align: center;
}
.tree {
  flex: 1;
  min-height: 0;
  margin: 0;
  padding: 0 0 0 7px;
  border-bottom: 2px solid #a0a0a0;
  background: #fff;
  list-style: none;
}
.tree li {
  display: flex;
  align-items: center;
  position: relative;
  height: 18px;
}
.tree li > span {
  padding: 0 2px;
}
.tree li > .icon {
  width: 16px;
  height: 16px;
  margin-right: 2px;
}
.rail {
  position: relative;
  flex: none;
  width: 19px;
  height: 18px;
  background: repeating-linear-gradient(#888 0 1px, transparent 1px 2px) 4px 0 / 1px 100% no-repeat;
}
.rail.first {
  background-position: 4px 9px;
}
.rail.half {
  background-size: 1px 10px;
}
.rail.none {
  background: none;
}
.rail.branch::before {
  content: "";
  display: block;
  width: 12px;
  height: 1px;
  margin: 9px 0 0 4px;
  background: repeating-linear-gradient(90deg, #888 0 1px, transparent 1px 2px);
}
.rail.branch {
  display: flow-root;
  width: 16px;
}
.rail b {
  display: block;
  width: 9px;
  height: 9px;
  margin-top: -5px;
  border: 1px solid #919191;
  border-radius: 1px;
  background: linear-gradient(#2b4a9b, #2b4a9b) 1px 3px / 5px 1px no-repeat, #fff;
}
.rail b.plus {
  background: linear-gradient(#2b4a9b, #2b4a9b) 1px 3px / 5px 1px no-repeat,
    linear-gradient(#2b4a9b, #2b4a9b) 3px 1px / 1px 5px no-repeat, #fff;
}
.selected {
  z-index: 1;
}
.tree .selected > span {
  background: #f0f0f0;
}
.marker {
  position: absolute;
  top: -5px;
  left: 24px;
  width: 74px;
  height: 28px;
  border: 3px solid #ed1c24;
}

/* layer bar and status */
.layers .band {
  padding-left: 1px;
}
.status {
  display: flex;
  align-items: flex-start;
  flex: none;
  height: 14px;
  padding: 2px 98px 0 3px;
  overflow: hidden;
  border-top: 1px solid #d8d8d8;
  background: linear-gradient(#c8c8c8, #c8c8c8) calc(100% - 17px) 2px / 1px 12px no-repeat, #f0f0f0;
  font-family: Roboto, "Noto Sans CJK SC", sans-serif;
  font-size: 13px;
}
.hint {
  flex: 1;
}
</style>
